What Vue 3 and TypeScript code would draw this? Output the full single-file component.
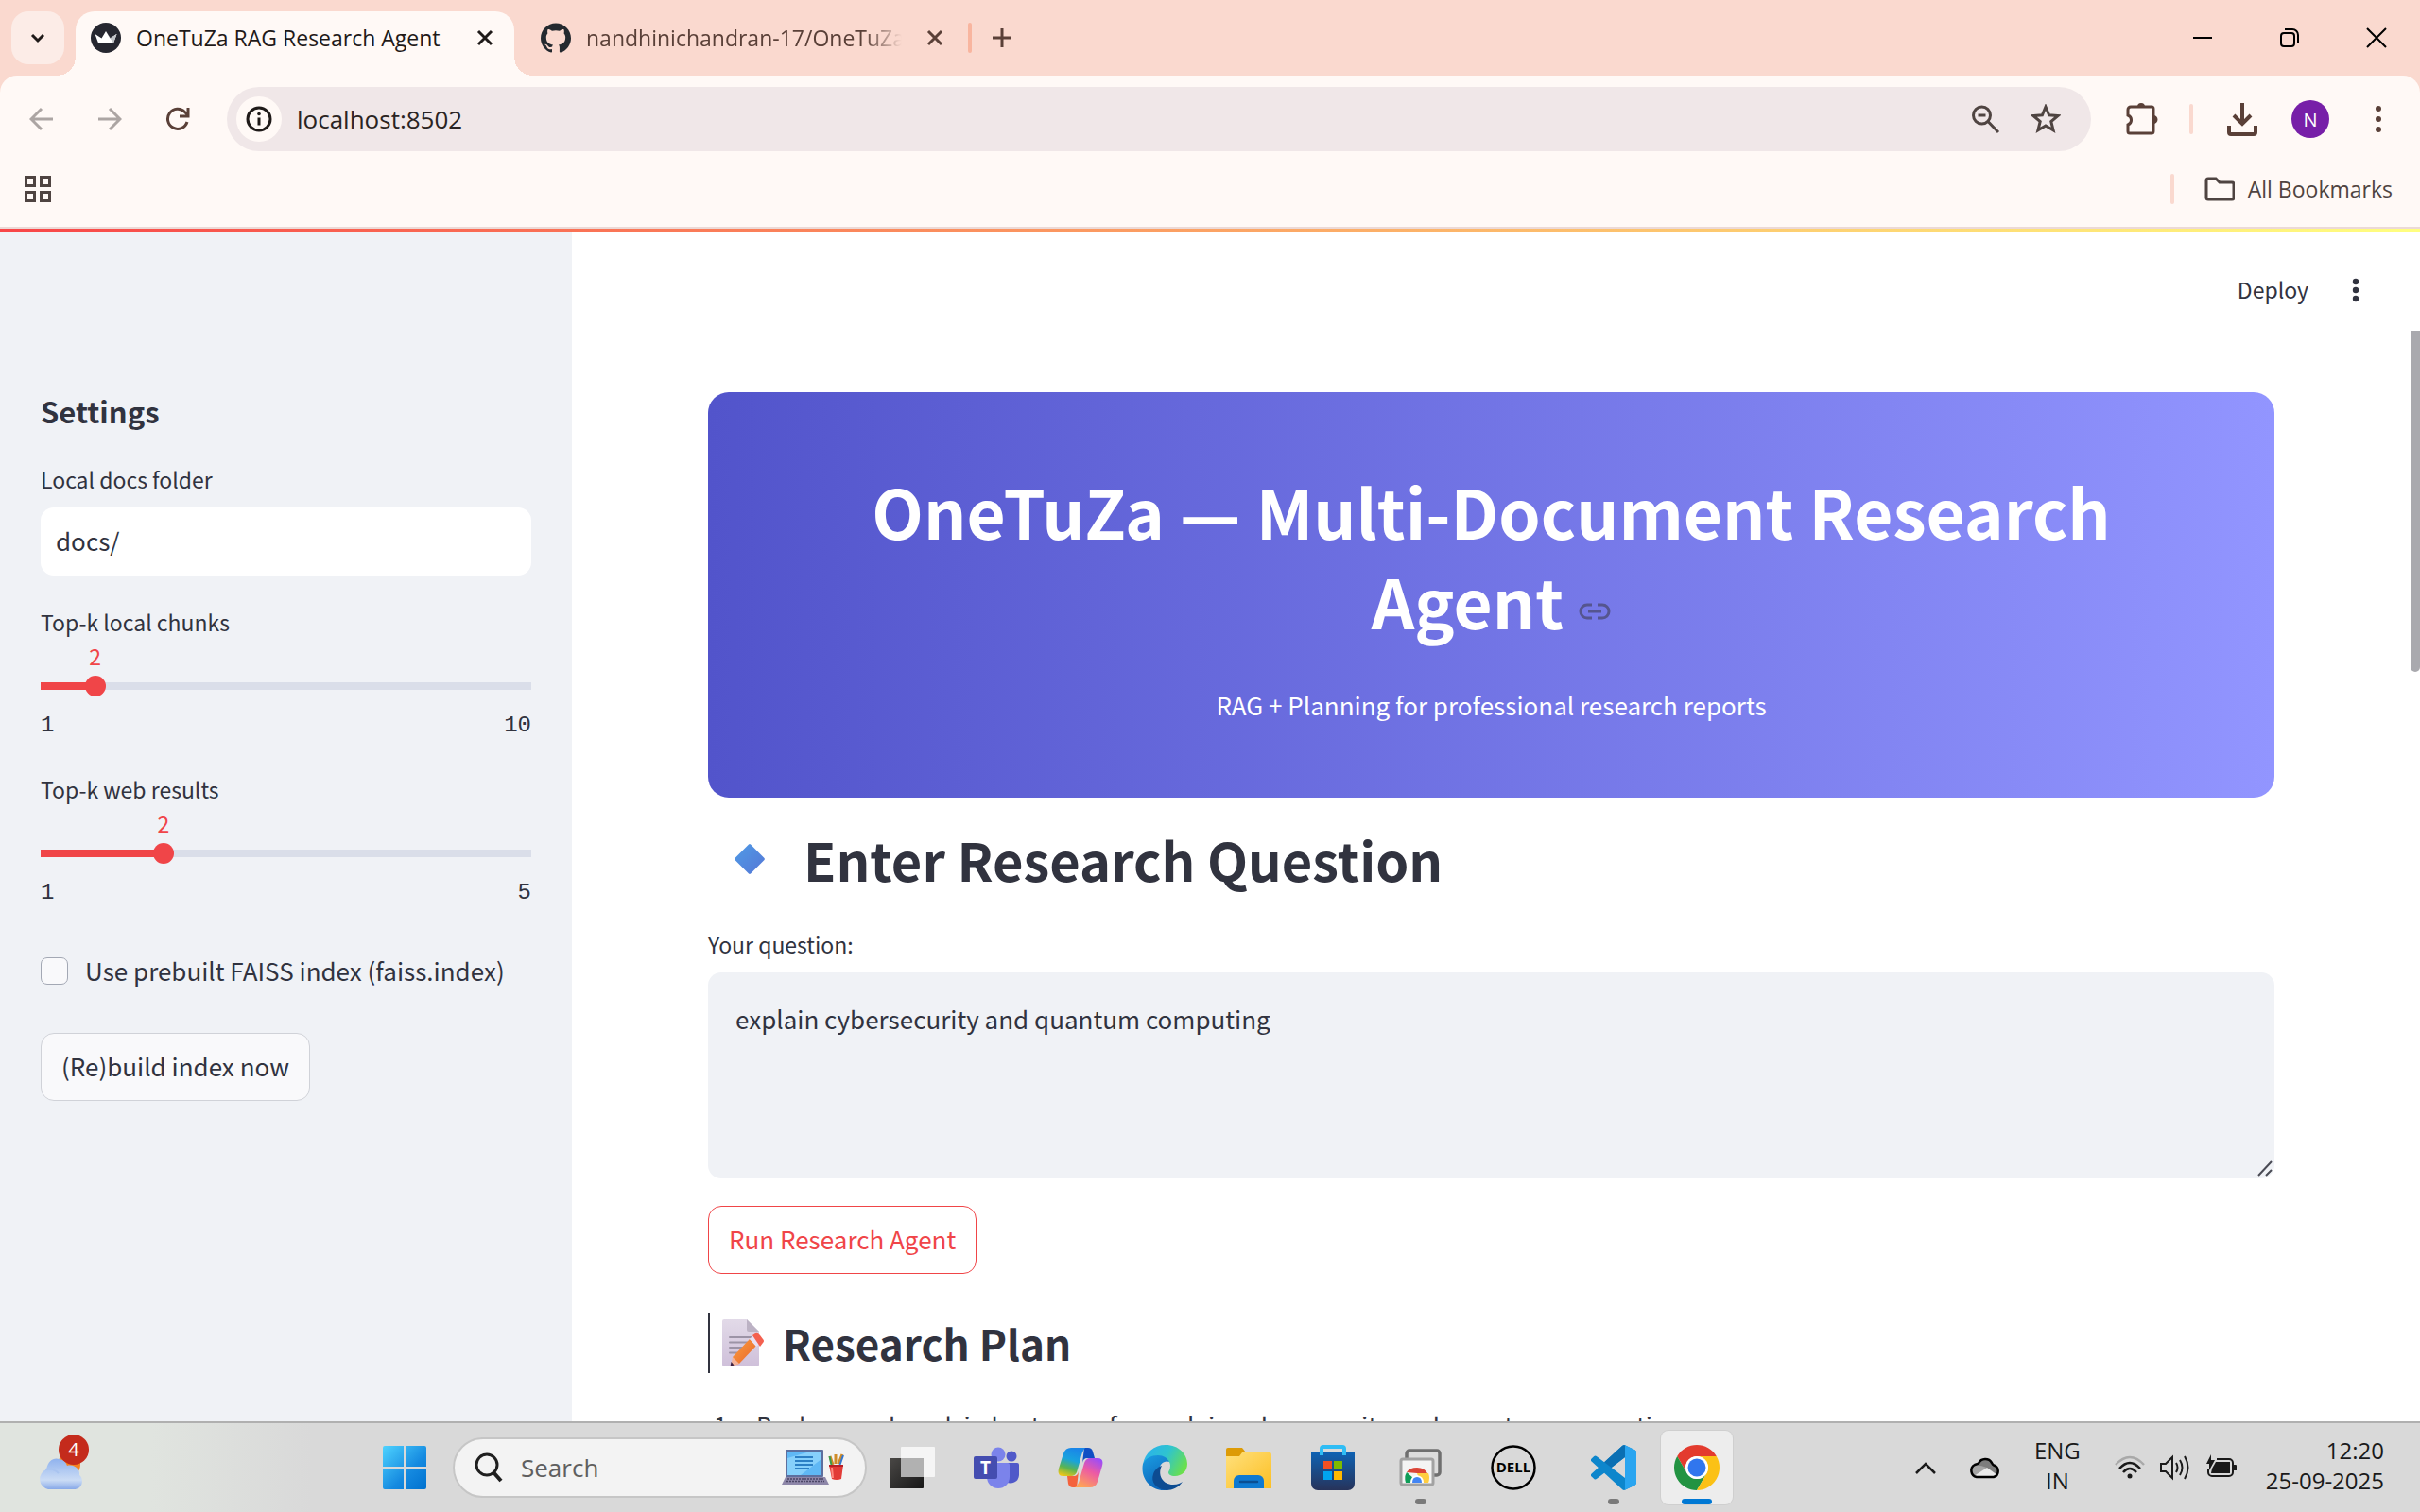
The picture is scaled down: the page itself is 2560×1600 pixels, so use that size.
<script setup lang="ts">
import { computed, ref } from 'vue'

interface SliderField {
  id: string
  label: string
  min: number
  max: number
  value: number
}

const docsFolder = ref('docs/')
const usePrebuilt = ref(false)
const address = ref('localhost:8502')
const question = ref('explain cybersecurity and quantum computing')
const search = ref('')

const sliders = ref<SliderField[]>([
  { id: 'top-k-local', label: 'Top-k local chunks', min: 1, max: 10, value: 2 },
  { id: 'top-k-web', label: 'Top-k web results', min: 1, max: 5, value: 2 },
])

const fills = computed(() =>
  sliders.value.map((s) => `${((s.value - s.min) / (s.max - s.min)) * 100}%`),
)
</script>

<template>
  <div class="screen">
    <header class="browser">
      <div class="tabstrip">
        <button class="tab-search" aria-label="Search tabs">
          <svg width="20" height="20" viewBox="0 0 20 20"><path d="M4 7l6 6 6-6" fill="none" stroke="#1f1a19" stroke-width="3" /></svg>
        </button>
        <div class="tab active">
          <svg class="favicon" viewBox="0 0 32 32">
            <circle cx="16" cy="16" r="16" fill="#262730" />
            <path d="M4.500 12l7 4.500 4.500-7.500 4.500 7.500 7-4.500-3.500 9.500h-16z" fill="#fff" />
            <path d="M16 9l4.500 7.500 7-4.500-3.500 9.500z" fill="#d5d6da" />
            <path d="M11.500 16.500L24 21.500l-3.500-5 7-4.500-3.500 9.500z" fill="#b3b5bb" opacity=".6" />
          </svg>
          <span class="tab-title">OneTuZa RAG Research Agent</span>
          <button class="tab-close" aria-label="Close tab">
            <svg width="18" height="18" viewBox="0 0 18 18"><path d="M2 2l14 14M16 2L2 16" stroke="#1f1a19" stroke-width="3" /></svg>
          </button>
        </div>
        <div class="tab">
          <svg class="favicon" viewBox="0 0 24 24"><path fill="#24292f" d="M12 .297c-6.630 0-12 5.373-12 12 0 5.303 3.438 9.800 8.205 11.385.6.113.82-.258.82-.577 0-.285-.01-1.040-.015-2.040-3.338.724-4.042-1.610-4.042-1.610C4.422 18.070 3.633 17.700 3.633 17.700c-1.087-.744.084-.729.084-.729 1.205.084 1.838 1.236 1.838 1.236 1.070 1.835 2.809 1.305 3.495.998.108-.776.417-1.305.76-1.605-2.665-.3-5.466-1.332-5.466-5.930 0-1.310.465-2.380 1.235-3.220-.135-.303-.54-1.523.105-3.176 0 0 1.005-.322 3.300 1.230.96-.267 1.980-.399 3-.405 1.020.006 2.040.138 3 .405 2.280-1.552 3.285-1.230 3.285-1.230.645 1.653.24 2.873.12 3.176.765.84 1.230 1.910 1.230 3.220 0 4.610-2.805 5.625-5.475 5.920.42.36.81 1.096.81 2.220 0 1.606-.015 2.896-.015 3.286 0 .315.21.69.825.57C20.565 22.092 24 17.592 24 12.297c0-6.627-5.373-12-12-12" /></svg>
          <span class="tab-title faded">nandhinichandran-17/OneTuZa</span>
          <button class="tab-close" aria-label="Close tab">
            <svg width="18" height="18" viewBox="0 0 18 18"><path d="M2 2l14 14M16 2L2 16" stroke="#5a4038" stroke-width="3" /></svg>
          </button>
        </div>
        <span class="strip-rule"></span>
        <button class="new-tab" aria-label="New tab">
          <svg width="20" height="20" viewBox="0 0 20 20"><path d="M10 0v20M0 10h20" stroke="#5a4038" stroke-width="3" /></svg>
        </button>
        <div class="window-controls">
          <button aria-label="Minimize"><svg width="22" height="22" viewBox="0 0 22 22"><path d="M1 11h20" stroke="#000" stroke-width="2" /></svg></button>
          <button aria-label="Restore"><svg width="22" height="22" viewBox="0 0 22 22" fill="none" stroke="#000" stroke-width="2"><rect x="2" y="6" width="14" height="14" rx="3" /><path d="M6 2h8a6 6 0 0 1 6 6v8" /></svg></button>
          <button aria-label="Close"><svg width="22" height="22" viewBox="0 0 22 22"><path d="M1 1l20 20M21 1L1 21" stroke="#000" stroke-width="2" /></svg></button>
        </div>
      </div>

      <div class="chrome-body">
        <div class="toolbar">
          <button class="nav" aria-label="Back"><svg width="26" height="26" viewBox="0 0 26 26" fill="none" stroke="#aca5a3" stroke-width="3"><path d="M25 13H3M13 2L2 13l11 11" /></svg></button>
          <button class="nav" aria-label="Forward"><svg width="26" height="26" viewBox="0 0 26 26" fill="none" stroke="#aca5a3" stroke-width="3"><path d="M1 13h22M13 2l11 11-11 11" /></svg></button>
          <button class="nav" aria-label="Reload"><svg width="26" height="26" viewBox="0 0 26 26" fill="none" stroke="#5a4038" stroke-width="3"><path d="M23 16a10.500 10.500 0 1 1-2.500-10.500L24 9M24 1v9h-9" /></svg></button>
          <div class="omnibox">
            <span class="site-info"><svg width="28" height="28" viewBox="0 0 28 28"><circle cx="14" cy="14" r="12" fill="none" stroke="#1f1a19" stroke-width="3" /><path d="M14 12.500v8" stroke="#1f1a19" stroke-width="3" /><circle cx="14" cy="8.500" r="1.800" fill="#1f1a19" /></svg></span>
            <input v-model="address" class="address" type="text" aria-label="Address" />
            <svg width="32" height="32" viewBox="0 0 32 32" fill="none" stroke="#4f4441" stroke-width="3"><circle cx="12.500" cy="12" r="9" /><path d="M8.500 12h8M19 18.500L30 30" /></svg>
            <svg class="star" width="32" height="32" viewBox="0 0 32 32"><path d="M16 3l3.600 8.800 9.500.7-7.300 6.100 2.300 9.300-8.100-5-8.100 5 2.300-9.300L2.900 12.500l9.500-.7z" fill="none" stroke="#4f4441" stroke-width="3" /></svg>
          </div>
          <button class="tool puzzle" aria-label="Extensions"><svg width="36" height="36" viewBox="0 0 36 36"><path d="M3 8a3 3 0 0 1 3-3h22a2 2 0 0 1 2 2v24a2 2 0 0 1-2 2H5a2 2 0 0 1-2-2v-7a5.300 5.300 0 0 0 0-10z" fill="none" stroke="#5a4038" stroke-width="3" /><path d="M13 5a4 4 0 0 1 8 0zM30 14a4.500 4.500 0 0 1 0 9z" fill="#5a4038" /></svg></button>
          <span class="tool-rule"></span>
          <button class="tool download" aria-label="Downloads"><svg width="34" height="36" viewBox="0 0 34 36" fill="none" stroke="#5a4038" stroke-width="4"><path d="M17 1v21M8 14l9 9 9-9M3 25v7a2 2 0 0 0 2 2h24a2 2 0 0 0 2-2v-7" /></svg></button>
          <button class="avatar" aria-label="Profile">N</button>
          <button class="tool more" aria-label="Menu"><svg width="8" height="30" viewBox="0 0 8 30" fill="#5a4038"><circle cx="4" cy="4" r="3" /><circle cx="4" cy="15" r="3" /><circle cx="4" cy="26" r="3" /></svg></button>
        </div>
        <div class="bookmarks">
          <button class="apps" aria-label="Apps"><svg width="30" height="30" viewBox="0 0 30 30" fill="none" stroke="#4f4441" stroke-width="3"><path d="M2.500 2.500h9v9h-9zM18.500 2.500h9v9h-9zM2.500 18.500h9v9h-9zM18.500 18.500h9v9h-9z" /></svg></button>
          <span class="tool-rule"></span>
          <button class="all-bookmarks">
            <svg width="32" height="26" viewBox="0 0 32 26"><path d="M2 4a2 2 0 0 1 2-2h8l4 4h13a2 2 0 0 1 2 2v14a2 2 0 0 1-2 2H4a2 2 0 0 1-2-2z" fill="none" stroke="#4f4441" stroke-width="3" /></svg>
            All Bookmarks
          </button>
        </div>
      </div>
    </header>
    <div class="decoration"></div>

    <div class="app">
      <aside class="sidebar">
        <h3>Settings</h3>
        <div class="field">
          <label for="docs-folder">Local docs folder</label>
          <input id="docs-folder" v-model="docsFolder" class="text-input" type="text" />
        </div>
        <div v-for="(s, i) in sliders" :key="s.id" class="slider">
          <label :for="s.id">{{ s.label }}</label>
          <div class="value" :style="{ marginLeft: fills[i] }"><output :for="s.id">{{ s.value }}</output></div>
          <div class="rail" :style="{ '--fill': fills[i] }">
            <input :id="s.id" v-model.number="s.value" type="range" :min="s.min" :max="s.max" />
          </div>
          <div class="ends"><span>{{ s.min }}</span><span>{{ s.max }}</span></div>
        </div>
        <label class="check"><input v-model="usePrebuilt" type="checkbox" />Use prebuilt FAISS index (faiss.index)</label>
        <button class="btn">(Re)build index now</button>
      </aside>

      <main class="main">
        <div class="app-header">
          <button class="deploy">Deploy</button>
          <button class="dots" aria-label="Main menu"><svg width="8" height="26" viewBox="0 0 8 26" fill="#31333f"><circle cx="4" cy="4" r="3.200" /><circle cx="4" cy="13" r="3.200" /><circle cx="4" cy="22" r="3.200" /></svg></button>
        </div>
        <section class="hero">
          <h1>OneTuZa — Multi-Document Research Agent <a href="#agent" aria-label="Link to heading"><svg width="34" height="20" viewBox="0 0 34 20" fill="none" stroke="#55558f" stroke-width="3"><path d="M14 3H9a7 7 0 0 0 0 14h5M20 3h5a7 7 0 0 1 0 14h-5M10 10h14" /></svg></a></h1>
          <p>RAG + Planning for professional research reports</p>
        </section>
        <h2>
          <svg width="34" height="34" viewBox="0 0 34 34">
            <defs><linearGradient id="diamond" x1="0" y1="0" x2="1" y2="1"><stop offset="0" stop-color="#4f9be6" /><stop offset="1" stop-color="#5577d6" /></linearGradient></defs>
            <path d="M16 1.500a1.500 1.500 0 0 1 2 0L32.500 16a1.500 1.500 0 0 1 0 2L18 32.500a1.500 1.500 0 0 1-2 0L1.500 18a1.500 1.500 0 0 1 0-2z" fill="url(#diamond)" />
          </svg>
          Enter Research Question
        </h2>
        <div class="question">
          <label for="question">Your question:</label>
          <div class="area">
            <textarea id="question" v-model="question"></textarea>
            <svg class="grip" width="16" height="18" viewBox="0 0 16 18"><path d="M1 17L15 2M9 17l6-6" stroke="#4a4b55" stroke-width="2" /></svg>
          </div>
        </div>
        <button class="btn primary">Run Research Agent</button>
        <h3 class="plan">
          <svg width="46" height="52" viewBox="0 0 46 52">
            <defs>
              <linearGradient id="paper" x1="0" y1="0" x2="0" y2="1"><stop offset="0" stop-color="#e2dae8" /><stop offset="1" stop-color="#cfc0da" /></linearGradient>
              <linearGradient id="pencil" x1="0" y1="0" x2="1" y2="1"><stop offset="0" stop-color="#fba03c" /><stop offset="1" stop-color="#e8622e" /></linearGradient>
            </defs>
            <path d="M3 1h24l13 13v35a2 2 0 0 1-2 2H3a2 2 0 0 1-2-2V3a2 2 0 0 1 2-2z" fill="url(#paper)" />
            <path d="M27 1l13 13H29a2 2 0 0 1-2-2z" fill="#bcb2c4" />
            <path d="M9 20h23M9 25.500h19M9 31h15M9 36.500h10" stroke="#9c93a6" stroke-width="2" stroke-linecap="round" />
            <path d="M12 41l18-19 7 7-18 19-7 2z" fill="url(#pencil)" />
            <path d="M30 22l4-4 8 8-5 4z" fill="#e9dff2" />
            <path d="M33 18l3-2q3-1 5 2l3 4q2 2 0 4l-3 4z" fill="#f4604f" />
            <path d="M12 41l7 7-9 3z" fill="#f4b39a" />
            <path d="M10.500 46l3 3.500L9.500 51z" fill="#3c2243" />
          </svg>
          Research Plan
        </h3>
        <ol>
          <li>Background work in best ways for explain cybersecurity and quantum computing</li>
        </ol>
      </main>
      <div class="scrollbar"><div class="thumb"></div></div>
    </div>

    <footer class="taskbar">
      <div class="widgets">
        <button class="weather" aria-label="Weather">
          <svg width="50" height="38" viewBox="0 0 50 38">
            <defs><linearGradient id="cloud" x1="0" y1="0" x2="0" y2="1"><stop offset="0" stop-color="#8fb2ee" /><stop offset=".7" stop-color="#cbdcf5" /><stop offset="1" stop-color="#88a9e8" /></linearGradient></defs>
            <circle cx="34" cy="10" r="12" fill="#f58220" />
            <path d="M12 36a11 11 0 0 1-2-21C12 5 18 2 24 4c5 1 7 4 8 7 8-2 14 4 13 10 5 4 4 15-6 15z" fill="url(#cloud)" />
            <path d="M9 15q8-2 14 4" stroke="#a9c4f0" stroke-width="2" fill="none" />
          </svg>
          <span class="badge">4</span>
        </button>
      </div>
      <button class="task" aria-label="Start">
        <svg width="46" height="46" viewBox="0 0 46 46">
          <defs><linearGradient id="win" x1="0" y1="0" x2="1" y2="1"><stop offset="0" stop-color="#4fd3ff" /><stop offset=".6" stop-color="#158ae0" /><stop offset="1" stop-color="#0071cf" /></linearGradient></defs>
          <path d="M2 0h20v22H0V2a2 2 0 0 1 2-2zM24 0h20a2 2 0 0 1 2 2v20H24zM0 24h22v22H2a2 2 0 0 1-2-2zM24 24h22v20a2 2 0 0 1-2 2H24z" fill="url(#win)" />
        </svg>
      </button>
      <label class="search">
        <svg width="32" height="32" viewBox="0 0 32 32" fill="none" stroke="#1f1f1f" stroke-width="3"><circle cx="14" cy="13" r="11" /><path d="M21 21l8 9" stroke-width="4" /></svg>
        <input v-model="search" type="text" placeholder="Search" aria-label="Search" />
        <svg class="doodle" width="68" height="40" viewBox="0 0 68 40">
          <rect x="4" y="1" width="40" height="29" rx="1" fill="#5d6f9e" /><rect x="6" y="3" width="36" height="25" fill="#5fb8f5" /><path d="M6 28V10L30 3h12v8L20 28z" fill="#86d0fb" />
          <path d="M14 9h19M14 13h19M14 17h19M14 21h15" stroke="#2b7fc4" stroke-width="2" />
          <path d="M4 30h42l4 8H0z" fill="#8d86a8" /><path d="M6 32h38M5 34.500h40" stroke="#4b4666" stroke-width="1.500" stroke-dasharray="2 1" />
          <path d="M54 17L51 8M57 16V6M60 16l4-10" stroke-width="3" stroke="#d08b28" /><path d="M52.500 17L50.500 8" stroke-width="2" stroke="#3c9a4c" /><path d="M61.500 17L65 7" stroke-width="2" stroke="#3477cf" />
          <path d="M50 17h15l-2 15q-5 2-10 0z" fill="#e23b37" /><path d="M50 17h15v2H50z" fill="#b91f25" /><path d="M53 20l1 11" stroke="#ff8a80" stroke-width="2" />
        </svg>
      </label>
      <div class="pinned">
        <button class="task" aria-label="Task view"><svg width="48" height="44" viewBox="0 0 48 44">
          <defs><linearGradient id="tv" x1="0" y1="0" x2="1" y2="1"><stop offset="0" stop-color="#4a4846" /><stop offset="1" stop-color="#171717" /></linearGradient></defs>
          <rect y="12" width="36" height="32" rx="1" fill="url(#tv)" /><rect x="12" width="36" height="32" rx="1" fill="#f7f7f7" opacity=".95" /><path d="M12 12h24v20H12z" fill="#b1b1b1" />
        </svg></button>
        <button class="task" aria-label="Teams"><svg width="48" height="44" viewBox="0 0 48 44">
          <circle cx="40" cy="10" r="5.500" fill="#5059c9" /><circle cx="26" cy="8" r="7.500" fill="#7b83eb" />
          <path d="M30 17h16a2 2 0 0 1 2 2v11a9 9 0 0 1-14 7z" fill="#5059c9" /><path d="M14 17h22a2 2 0 0 1 2 2v13a12 12 0 0 1-24 0z" fill="#7b83eb" />
          <rect y="10" width="25" height="24" rx="2" fill="#444db0" /><text x="12.500" y="29" text-anchor="middle" font-family="Open Sans, sans-serif" font-weight="700" font-size="19" fill="#fff">T</text>
        </svg></button>
        <button class="task" aria-label="Copilot"><svg width="48" height="44" viewBox="0 0 48 44">
          <defs>
            <linearGradient id="cpA" x1="0.500" y1="0" x2="0.200" y2="1"><stop offset="0" stop-color="#1a86e8" /><stop offset=".4" stop-color="#18a3dd" /><stop offset=".7" stop-color="#5bb450" /><stop offset="1" stop-color="#f2c718" /></linearGradient>
            <linearGradient id="cpB" x1="0.800" y1="0" x2="0.300" y2="1"><stop offset="0" stop-color="#9a4dfa" /><stop offset=".45" stop-color="#ec5aa4" /><stop offset="1" stop-color="#ffa456" /></linearGradient>
          </defs>
          <path d="M28 1h4q4 0 5 4l2 7h-8q-4 0-5 5z" fill="#0f4fc4" />
          <path d="M20 43h-4q-4 0-5-4l-1-8h7q4 0 5-5z" fill="#f4623c" />
          <path d="M14 1h15q-3 3-5 12l-4 14q-2 4-6 4H6q-7 0-5-8L6 7q2-6 8-6z" fill="url(#cpA)" />
          <path d="M34 43H18q4-2 6-12l4-14q2-5 6-5h8q7 0 5 8l-5 17q-2 6-8 6z" fill="url(#cpB)" />
        </svg></button>
        <button class="task" aria-label="Edge"><svg width="48" height="48" viewBox="0 0 48 48">
          <defs>
            <linearGradient id="edA" x1="0" y1="0.200" x2="1" y2="0.600"><stop offset="0" stop-color="#2ab1ee" /><stop offset=".5" stop-color="#2fc4cf" /><stop offset="1" stop-color="#6be04b" /></linearGradient>
            <linearGradient id="edB" x1="0" y1="0" x2="0.500" y2="1"><stop offset="0" stop-color="#1b9de2" /><stop offset="1" stop-color="#0c63b8" /></linearGradient>
          </defs>
          <path d="M1 21C3 8 13 0 25 0c14 0 23 10 23 20 0 8-6 13-13 13-5 0-7-2-7-4 0-1 2-3 2-7 0-6-6-10-13-10C9 12 3 16 1 21z" fill="url(#edA)" />
          <path d="M1 20c3-6 9-9 16-9 6 0 10 3 12 7-5-2-11 2-11 10 0 10 8 16 17 16-3 2-7 4-12 4C9 48-2 35 1 20z" fill="url(#edB)" />
          <path d="M21 22c-5 10 1 20 12 20 5 0 8-2 10-3-4 6-11 9-17 9-11-1-17-9-14-17 1-4 5-8 9-9z" fill="#0d4c92" />
        </svg></button>
        <button class="task" aria-label="File Explorer"><svg width="48" height="44" viewBox="0 0 48 44">
          <defs><linearGradient id="fe" x1="0" y1="0" x2="1" y2="1"><stop offset="0" stop-color="#ffe07c" /><stop offset="1" stop-color="#fcbf23" /></linearGradient></defs>
          <path d="M2 1h15l4 5v8H0V3a2 2 0 0 1 2-2z" fill="#dd9b06" /><path d="M17 6h29a2 2 0 0 1 2 2v36H0V10h14z" fill="url(#fe)" />
          <path d="M8 44V36a6 6 0 0 1 6-6h20a6 6 0 0 1 6 6v8z" fill="#0f7ad1" /><path d="M15 37h18" stroke="#0a4f93" stroke-width="2.500" stroke-linecap="round" />
        </svg></button>
        <button class="task" aria-label="Microsoft Store"><svg width="48" height="48" viewBox="0 0 48 48">
          <defs><linearGradient id="st" x1="0" y1="0" x2="0" y2="1"><stop offset="0" stop-color="#0e63b5" /><stop offset="1" stop-color="#27335a" /></linearGradient></defs>
          <path d="M1 7h46v34a7 7 0 0 1-7 7H8a7 7 0 0 1-7-7z" fill="url(#st)" /><path d="M12 11V4a2 2 0 0 1 2-2h20a2 2 0 0 1 2 2v7" fill="none" stroke="#2fbdf5" stroke-width="4" />
          <path d="M14 17h9v9h-9z" fill="#f25022" /><path d="M25 17h9v9h-9z" fill="#7fba00" /><path d="M14 28h9v9h-9z" fill="#00a4ef" /><path d="M25 28h9v9h-9z" fill="#ffb900" />
        </svg></button>
      </div>
      <div class="apps-group">
        <button class="task running" aria-label="Remote Desktop"><svg width="46" height="40" viewBox="0 0 46 40">
          <rect x="8" y="2" width="35" height="26" rx="3" fill="#dcdcdc" stroke="#6f6f6f" stroke-width="3.500" /><rect x="2" y="11" width="34" height="27" rx="2" fill="#f4f4f4" stroke="#a2a2a2" stroke-width="3" />
          <path d="M8 25q3-5 11-5 8 0 11 6H19z" fill="#db4437" /><path d="M19 26h12q2 5 0 10h-9z" fill="#ffcd40" /><path d="M7 36q-2-6 1-11l7 6 1 5z" fill="#0f9d58" /><path d="M12 36q0-7 7-8 7 1 7 8z" fill="#fff" /><path d="M14 36q0-6 5-6t5 6z" fill="#4285f4" />
        </svg></button>
        <button class="task" aria-label="Dell"><svg width="48" height="48" viewBox="0 0 48 48">
          <circle cx="24" cy="24" r="22.500" fill="none" stroke="#000" stroke-width="2.500" /><text x="24" y="29" text-anchor="middle" font-family="Open Sans, sans-serif" font-weight="700" font-size="15" fill="#000">DELL</text>
        </svg></button>
      </div>
      <div class="open-group">
        <button class="task running" aria-label="Visual Studio Code"><svg width="48" height="48" viewBox="0 0 24 24">
          <path fill="#0d86cc" d="M23.150 2.587L18.210.21a1.494 1.494 0 0 0-1.705.29l-9.460 8.630-4.120-3.128a.999.999 0 0 0-1.276.057L.327 7.261A1 1 0 0 0 .326 8.740L3.899 12 .326 15.260a1 1 0 0 0 .001 1.479L1.650 17.940a.999.999 0 0 0 1.276.057l4.120-3.128 9.460 8.630a1.492 1.492 0 0 0 1.704.29l4.942-2.377A1.500 1.500 0 0 0 24 20.060V3.939a1.500 1.500 0 0 0-.85-1.352zm-5.146 14.861L10.826 12l7.178-5.448v10.896z" />
          <path d="M18.004 6.552V.15l5.146 2.437a1.500 1.500 0 0 1 .85 1.352v16.121a1.500 1.500 0 0 1-.85 1.352l-5.146 2.400z" fill="#2aa5f0" />
          <path d="M16.505.5l-9.460 8.630 3.781 2.870 7.178-5.448V.2q-.8-.2-1.499.3z" fill="#0a6fb3" />
        </svg></button>
        <button class="task running current" aria-label="Google Chrome"><svg width="48" height="48" viewBox="0 0 48 48">
          <path d="M44.780 12H24A12 12 0 0 0 13.610 30L3.220 12A24 24 0 0 1 44.780 12z" fill="#e33b2e" />
          <path d="M3.220 12L13.610 30A12 12 0 0 0 34.390 30L24 48A24 24 0 0 1 3.220 12z" fill="#229342" />
          <path d="M24 48L34.390 30A12 12 0 0 0 24 12H44.780A24 24 0 0 1 24 48z" fill="#fbc116" />
          <circle cx="24" cy="24" r="12" fill="#fff" /><circle cx="24" cy="24" r="9.500" fill="#3076ee" />
        </svg></button>
      </div>
      <div class="tray">
        <button class="tray-icon" aria-label="Show hidden icons"><svg width="22" height="14" viewBox="0 0 22 14"><path d="M1 13L11 3l10 10" fill="none" stroke="#1a1a1a" stroke-width="2.500" /></svg></button>
        <button class="tray-icon" aria-label="OneDrive"><svg width="34" height="24" viewBox="0 0 34 24"><path d="M8 22A7 7 0 0 1 6 9Q9 8 10 7.500A8 8 0 0 1 24 7q1 2 2 2.500A6.500 6.500 0 0 1 26 22z" fill="#7d7d7d" /><path d="M3 20q-3-6 3-10 5-1 13 2L6 21z" fill="#a5a5a5" /><path d="M5 21l14-9 11 8-3 2H8z" fill="#ececec" /><path d="M8 22A7 7 0 0 1 6 9Q9 8 10 7.500A8 8 0 0 1 24 7q1 2 2 2.500A6.500 6.500 0 0 1 26 22z" fill="none" stroke="#000" stroke-width="2.500" /></svg></button>
        <button class="lang">ENG<br />IN</button>
        <button class="system" aria-label="Network, volume and battery">
          <svg width="32" height="26" viewBox="0 0 32 26" fill="none" stroke="#1a1a1a" stroke-width="2.500"><path d="M1 10q15-16 30 0" stroke="#a9a9a9" /><path d="M5 14q11-12 22 0M9 18q7-8 14 0" /><circle cx="16" cy="22" r="2.500" fill="#1a1a1a" stroke="none" /></svg>
          <svg width="34" height="28" viewBox="0 0 34 28" fill="none" stroke="#1a1a1a" stroke-width="2"><path d="M2 10h5l7-7v22l-7-7H2zM18 9q3 5 0 10M22 6q5 8 0 16M27 2q7 12 0 24" /></svg>
          <svg width="34" height="28" viewBox="0 0 34 28"><path d="M12 5h13a4 4 0 0 1 4 4v10a4 4 0 0 1-4 4H7a4 4 0 0 1-4-4v-4" fill="none" stroke="#1a1a1a" stroke-width="2" /><path d="M11 8h15v12H6l1-5z" fill="#1a1a1a" /><path d="M29 11h3a1 1 0 0 1 1 1v5h-4z" fill="#1a1a1a" /><path d="M6 0v6h4L4 17v-7H1z" fill="#1a1a1a" /></svg>
        </button>
        <button class="clock">12:20<br />25-09-2025</button>
      </div>
    </footer>
  </div>
</template>

<style>
body {
  margin: 0;
}
</style>

<style scoped>
* {
  box-sizing: border-box;
}
button {
  border: 0;
  padding: 0;
  background: none;
  font: inherit;
  color: inherit;
}
svg {
  display: block;
  flex: none;
}
.screen {
  height: 100vh;
  display: flex;
  flex-direction: column;
  overflow: hidden;
  background: #fff;
  color: #31333f;
  font-family: "Noto Sans CJK SC", "Noto Sans", sans-serif;
}

/* Browser frame */
.browser {
  flex: none;
  background: #fad9cf;
  color: #1f1a19;
  font-family: "Open Sans", "Noto Sans", sans-serif;
  font-size: 23px;
}
.tabstrip {
  height: 80px;
  display: flex;
  align-items: center;
  padding-left: 12px;
}
.tab-search {
  width: 56px;
  height: 56px;
  margin-right: 12px;
  display: grid;
  place-items: center;
  border-radius: 18px;
  background: #fcece7;
}
.tab {
  position: relative;
  width: 464px;
  height: 68px;
  align-self: flex-end;
  display: flex;
  align-items: center;
  padding: 0 22px 12px 16px;
  border-radius: 20px 20px 0 0;
  color: #5a4038;
}
.tab + .tab {
  margin-left: 12px;
}
.tab.active {
  background: #fff9f6;
  color: #1f1a19;
}
.tab.active::before,
.tab.active::after {
  content: "";
  position: absolute;
  bottom: 0;
  width: 20px;
  height: 20px;
}
.tab.active::before {
  right: 100%;
  background: radial-gradient(circle at 0 0, transparent 20px, #fff9f6 20px);
}
.tab.active::after {
  left: 100%;
  background: radial-gradient(circle at 100% 0, transparent 20px, #fff9f6 20px);
}
.favicon {
  width: 32px;
  height: 32px;
  margin-right: 16px;
}
.tab-title {
  flex: 1;
  overflow: hidden;
  white-space: nowrap;
}
.faded {
  -webkit-mask-image: linear-gradient(90deg, #000 88%, transparent);
  mask-image: linear-gradient(90deg, #000 88%, transparent);
}
.tab-close {
  padding-left: 26px;
}
.strip-rule,
.tool-rule {
  width: 4px;
  height: 32px;
  border-radius: 2px;
  background: #fad9cf;
}
.strip-rule {
  margin-left: 4px;
  background: #f8b59f;
}
.new-tab {
  margin-left: 22px;
}
.window-controls {
  margin-left: auto;
  display: flex;
}
.window-controls button {
  width: 92px;
  height: 80px;
  display: grid;
  place-items: center;
}
.chrome-body {
  border-radius: 18px 18px 0 0;
  background: #fff9f6;
}
.toolbar {
  height: 92px;
  display: flex;
  align-items: center;
  padding: 0 40px 0 8px;
}
.nav {
  width: 72px;
  height: 68px;
  display: grid;
  place-items: center;
}
.omnibox {
  flex: 1;
  height: 68px;
  margin-left: 16px;
  display: flex;
  align-items: center;
  padding: 0 32px 0 10px;
  border-radius: 34px;
  background: #f0e7e8;
}
.site-info {
  width: 48px;
  height: 48px;
  display: grid;
  place-items: center;
  border-radius: 50%;
  background: #fff9f6;
}
.address {
  flex: 1;
  min-width: 0;
  margin-left: 16px;
  border: 0;
  padding: 0;
  background: none;
  font: inherit;
  font-size: 26px;
  color: #2a2322;
}
.star {
  margin-left: 32px;
}
.puzzle {
  margin-left: 36px;
}
.tool-rule {
  margin-left: 32px;
}
.download {
  margin-left: 35px;
}
.avatar {
  width: 40px;
  height: 40px;
  margin-left: 35px;
  border-radius: 50%;
  background: #771fa8;
  color: #fff;
  font-size: 20px;
}
.more {
  margin-left: 48px;
}
.bookmarks {
  height: 68px;
  display: flex;
  align-items: center;
  justify-content: space-between;
  padding: 0 29px 12px 25px;
}
.bookmarks .tool-rule {
  margin-left: auto;
}
.all-bookmarks {
  margin-left: 32px;
  display: flex;
  align-items: center;
  gap: 14px;
  color: #4f4441;
}
.decoration {
  flex: none;
  height: 6px;
  border-top: 2px solid #ecd9d6;
  background: linear-gradient(90deg, #f84648, #ffff80) padding-box;
}

/* Page */
.app {
  flex: 1;
  min-height: 0;
  display: flex;
  font-size: 26px;
  line-height: 46px;
}
.sidebar {
  width: 605px;
  flex: none;
  display: flex;
  flex-direction: column;
  align-items: stretch;
  gap: 30px;
  padding: 167px 43px 0;
  background: #f0f2f6;
}
h1,
h2,
h3,
p,
ol {
  margin: 0;
}
h1,
h2,
h3 {
  font-weight: 700;
}
.sidebar h3 {
  font-size: 31px;
  line-height: 44px;
}
.field label,
.slider label,
.question label {
  display: block;
  font-size: 23px;
}
.field label,
.question label {
  margin-bottom: 10px;
  line-height: 40px;
}
.slider label {
  line-height: 38px;
}
.text-input {
  display: block;
  width: 100%;
  height: 72px;
  border: 0;
  border-radius: 14px;
  padding: 0 16px 4px;
  background: #fff;
  font: inherit;
  color: inherit;
}
.slider {
  padding-bottom: 2px;
}
.value {
  width: 0;
  display: flex;
  justify-content: center;
  margin-bottom: 4px;
  color: #f04548;
  font-size: 23px;
  line-height: 34px;
}
.rail {
  background: linear-gradient(90deg, #f04548 var(--fill), #dadee9 var(--fill)) center / 100% 8px no-repeat;
}
.rail input {
  display: block;
  width: calc(100% + 22px);
  height: 22px;
  margin: 0 -11px;
  appearance: none;
  background: none;
}
.rail input::-webkit-slider-thumb {
  appearance: none;
  width: 22px;
  height: 22px;
  border-radius: 50%;
  background: #f04548;
}
.ends {
  margin-top: 15px;
  display: flex;
  justify-content: space-between;
  font-family: "Liberation Mono", monospace;
  font-size: 24px;
  line-height: 32px;
}
.check {
  height: 70px;
  display: flex;
  align-items: center;
  gap: 18px;
  padding-bottom: 2px;
  white-space: nowrap;
}
.check input {
  width: 29px;
  height: 29px;
  flex: none;
  margin: 0;
  appearance: none;
  border: 1px solid #a3a8b4;
  border-radius: 7px;
  background: #f9f9fb;
}
.check input:checked {
  background: #f04548;
}
.btn {
  align-self: flex-start;
  height: 72px;
  border: 1px solid #d0d2d8;
  border-radius: 14px;
  padding: 0 21px 2px;
  background: #f9f9fb;
}
.main {
  flex: 1;
  min-width: 0;
  display: flex;
  flex-direction: column;
  overflow: hidden;
  padding: 0 144px;
}
.app-header {
  height: 122px;
  flex: none;
  display: flex;
  align-items: center;
  justify-content: flex-end;
  gap: 46px;
  margin-right: -90px;
  font-size: 23px;
}
.deploy {
  padding-bottom: 3px;
}
.hero {
  flex: none;
  margin-top: 47px;
  padding: 78px 144px 75px;
  border-radius: 22px;
  background: linear-gradient(90deg, #5254cb, #9295ff);
  color: #fff;
  text-align: center;
}
h1 {
  font-size: 71px;
  line-height: 95px;
}
h1 svg {
  display: inline-block;
  vertical-align: middle;
}
.hero p {
  margin-top: 40px;
}
h2 {
  flex: none;
  display: flex;
  align-items: center;
  gap: 40px;
  margin-top: 26px;
  padding-left: 27px;
  font-size: 56px;
  line-height: 78px;
}
.question {
  flex: none;
  margin-top: 31px;
}
.area {
  position: relative;
}
textarea {
  display: block;
  width: 100%;
  height: 218px;
  resize: none;
  border: 0;
  border-radius: 14px;
  padding: 26px 29px;
  background: #f0f2f6;
  font: inherit;
  color: inherit;
}
.grip {
  position: absolute;
  right: 2px;
  bottom: 2px;
}
.btn.primary {
  flex: none;
  margin-top: 29px;
  border-color: #f04548;
  background: #fff;
  color: #f04548;
}
.plan {
  flex: none;
  display: flex;
  align-items: center;
  gap: 19px;
  margin-top: 41px;
  border-left: 2px solid #31333f;
  padding-left: 12px;
  font-size: 44px;
  line-height: 64px;
}
ol {
  flex: none;
  margin-top: 32px;
  padding-left: 6px;
  list-style: none;
  counter-reset: step;
}
li {
  display: flex;
  counter-increment: step;
}
li::before {
  content: counter(step) ".";
  width: 45px;
}
.scrollbar {
  width: 10px;
  flex: none;
  padding-top: 104px;
}
.thumb {
  height: 361px;
  border-radius: 0 0 5px 5px;
  background: #a9a9ae;
}

/* Taskbar */
.taskbar {
  flex: none;
  height: 96px;
  display: flex;
  align-items: center;
  border-top: 2px solid #b0b0b0;
  background: linear-gradient(90deg, #e0e4df 160px, #d9d9d9 330px);
  color: #1a1a1a;
  font-family: "Open Sans", "Noto Sans", sans-serif;
  font-size: 24px;
  line-height: 32px;
}
.widgets {
  width: 390px;
  flex: none;
  padding-left: 39px;
}
.weather {
  position: relative;
  display: block;
  padding-top: 12px;
}
.badge {
  position: absolute;
  top: -10px;
  right: -5px;
  width: 32px;
  height: 32px;
  border-radius: 50%;
  background: #c42b1c;
  color: #fff;
  font-size: 20px;
  text-align: center;
}
.task {
  position: relative;
  width: 76px;
  height: 78px;
  flex: none;
  display: grid;
  place-items: center;
  border-radius: 8px;
}
.running::after {
  content: "";
  position: absolute;
  bottom: 0;
  left: 50%;
  width: 12px;
  height: 6px;
  margin-left: -6px;
  border-radius: 3px;
  background: #7a7a7a;
}
.current {
  background: #ededed;
  box-shadow: 0 0 0 1px #cfcfcf;
}
.current::after {
  width: 32px;
  margin-left: -16px;
  background: #0078d4;
}
.search {
  width: 438px;
  height: 64px;
  flex: none;
  margin: 0 10px 0 13px;
  display: flex;
  align-items: center;
  border: 2px solid #c6c6c6;
  border-radius: 32px;
  padding: 0 20px;
  background: #f3f3f3;
}
.search input {
  flex: 1;
  min-width: 0;
  border: 0;
  padding: 0;
  margin-left: 18px;
  background: none;
  font: inherit;
  font-size: 26px;
}
.search input::placeholder {
  color: #5f5f5f;
}
.pinned,
.apps-group,
.open-group {
  display: flex;
  gap: 13px;
}
.apps-group {
  gap: 22px;
  margin-left: 17px;
}
.open-group {
  gap: 12px;
  margin-left: 30px;
}
.tray {
  margin-left: auto;
  display: flex;
  align-items: center;
  padding-right: 38px;
}
.tray-icon {
  margin-right: 35px;
}
.lang,
.clock {
  padding-bottom: 4px;
}
.lang {
  text-align: center;
}
.system {
  display: flex;
  align-items: center;
  gap: 15px;
  margin: 0 30px 0 36px;
}
.clock {
  text-align: right;
}
</style>
